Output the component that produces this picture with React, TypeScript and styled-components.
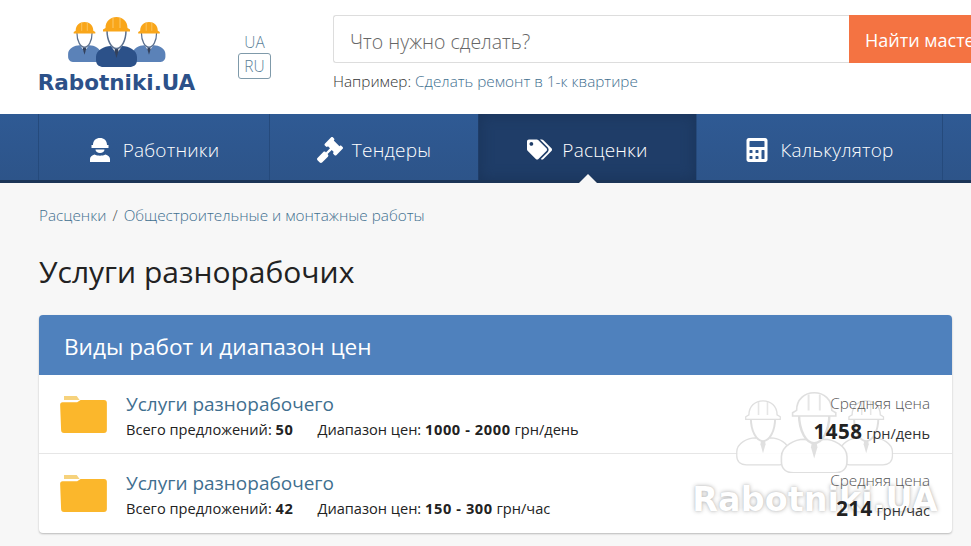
import * as React from "react"
import styled, { createGlobalStyle } from "styled-components"
import { FaCalculator, FaGavel, FaTags } from "react-icons/fa"

const GlobalStyle = createGlobalStyle`
  html, body {
    margin: 0;
    padding: 0;
    height: 100%;
    overflow: hidden;
    background: #f7f7f7;
  }
  body {
    font-family: "Open Sans", "Liberation Sans", sans-serif;
    color: #222;
  }
  * {
    box-sizing: border-box;
  }
`

const Workers = ({ mono }: { mono?: boolean }) => {
  const hat = mono ? "#fff" : "#f9a61a"
  const ridge = mono ? "#e4e4e4" : "#fcc45e"
  const back = mono ? "#fff" : "#5b82b8"
  const front = mono ? "#fff" : "#2c5189"
  const line = mono ? "#dcdcdc" : "#5a6f8e"
  const person = (cx: number, cy: number, s: number, body: string) => (
    <g transform={`translate(${cx} ${cy}) scale(${s})`}>
      <path
        d="M-20.500 40C-20.500 33-12 29-6 29L0 31 6 29C12 29 20.500 33 20.500 40V43C20.500 48 17 50 13 50H-13C-17 50-20.500 48-20.500 43z"
        fill={body}
        stroke={mono ? line : "none"}
        strokeWidth={mono ? 1 : 0}
      />
      <path d="M-5.500 29L0 37 5.500 29z" fill="#fff" />
      <path d="M-1.500 31H1.500L2 34 0 41-2 34z" fill={mono ? "#ddd" : "#33415c"} />
      <path d="M-9.500 13C-9.500 24-5 31.500 0 31.500S9.500 24 9.500 13" fill="#fff" stroke={line} strokeWidth="1.5" />
      <path
        d="M-11 11C-11 4-6 0 0 0S11 4 11 11L13.500 12.500V14.500H-13.500V12.500z"
        fill={hat}
        stroke={mono ? line : "none"}
        strokeWidth={mono ? 1 : 0}
      />
      <path d="M-3.500 1V11M3.500 1V11" stroke={ridge} strokeWidth="1.200" />
    </g>
  )
  return (
    <svg viewBox="0 0 100 51" width="100%" height="100%">
      {person(17.5, 6, 0.8, back)}
      {person(82, 6, 0.8, back)}
      {person(49.5, 1, 1, front)}
    </svg>
  )
}

const WorkerIcon = () => (
  <svg viewBox="0 0 22 25" width="22" height="25" fill="#fff">
    <path d="M4 8C4 3.500 7 1 11 1s7 2.500 7 7h1.500v3h-17V8z" />
    <path d="M6.500 12.500h9c0 2.200-2 3.600-4.500 3.600S6.500 14.700 6.500 12.500z" />
    <path d="M5.500 17.500c1.500.8 3.500 1.200 5.500 1.200s4-.4 5.500-1.200c2.500.6 4.500 2.500 4.500 4.500v3H1v-3c0-2 2-3.900 4.500-4.500z" />
  </svg>
)

const FolderIcon = () => (
  <svg viewBox="0 0 48 38" width="47" height="37">
    <path d="M4 0h13l3 4h-16z" fill="#f6d27c" />
    <path d="M0 9c0-1.500 1-2.500 2.500-2.500h15L21 4h24c2 0 3 1 3 3v28c0 2-1 3-3 3H4c-2 0-3-1-3-3z" fill="#fbb72c" />
  </svg>
)

export default function App() {
  return (
    <Page>
      <GlobalStyle />
      <Header>
        <Logo>
          <LogoArt>
            <Workers />
          </LogoArt>
          <LogoText>Rabotniki.UA</LogoText>
        </Logo>
        <Langs>
          <Lang>UA</Lang>
          <Lang active>RU</Lang>
        </Langs>
        <SearchBlock>
          <SearchRow>
            <SearchInput>Что нужно сделать?</SearchInput>
            <SearchButton>Найти мастера</SearchButton>
          </SearchRow>
          <Hint>
            Например: <HintLink>Сделать ремонт в 1-к квартире</HintLink>
          </Hint>
        </SearchBlock>
      </Header>

      <Nav>
        <NavItem width={231} gap={12}>
          <WorkerIcon />
          Работники
        </NavItem>
        <NavItem width={209} gap={9}>
          <FaGavel size={26} />
          Тендеры
        </NavItem>
        <NavItem width={218} gap={10} active>
          <FaTags size={25} />
          Расценки
        </NavItem>
        <NavItem width={247} gap={11}>
          <FaCalculator size={24} />
          Калькулятор
        </NavItem>
      </Nav>

      <Main>
        <Crumbs>
          <CrumbLink>Расценки</CrumbLink>
          <CrumbSep>/</CrumbSep>
          <CrumbLink>Общестроительные и монтажные работы</CrumbLink>
        </Crumbs>
        <Title>Услуги разнорабочих</Title>
        <Card>
          <CardHead>Виды работ и диапазон цен</CardHead>
          <Row>
            <FolderIcon />
            <RowBody>
              <RowTitle>Услуги разнорабочего</RowTitle>
              <RowMeta>
                <span>
                  Всего предложений: <b>50</b>
                </span>
                <span>
                  Диапазон цен: <b>1000 - 2000</b> грн/день
                </span>
              </RowMeta>
            </RowBody>
            <Price>
              <PriceLabel>Средняя цена</PriceLabel>
              <PriceValue>
                <b>1458</b> грн/день
              </PriceValue>
            </Price>
          </Row>
          <Row>
            <FolderIcon />
            <RowBody>
              <RowTitle>Услуги разнорабочего</RowTitle>
              <RowMeta>
                <span>
                  Всего предложений: <b>42</b>
                </span>
                <span>
                  Диапазон цен: <b>150 - 300</b> грн/час
                </span>
              </RowMeta>
            </RowBody>
            <Price>
              <PriceLabel>Средняя цена</PriceLabel>
              <PriceValue>
                <b>214</b> грн/час
              </PriceValue>
            </Price>
          </Row>
          <Watermark>
            <WatermarkArt>
              <Workers mono />
            </WatermarkArt>
            <WatermarkText>Rabotniki.UA</WatermarkText>
          </Watermark>
        </Card>
      </Main>
    </Page>
  )
}

const Page = styled.div`
  width: 971px;
  height: 546px;
  overflow: hidden;
`

const Header = styled.header`
  height: 114px;
  background: #fff;
  display: flex;
  align-items: flex-start;
  padding-left: 38px;
`

const Logo = styled.div`
  flex: none;
  width: 157px;
  padding-top: 16px;
  display: flex;
  flex-direction: column;
  align-items: center;
`

const LogoArt = styled.div`
  width: 100px;
  height: 51px;
  margin-bottom: 4px;
`

const LogoText = styled.div`
  font-family: "DejaVu Sans", sans-serif;
  font-weight: 700;
  font-size: 21.5px;
  line-height: 24px;
  color: #2c5189;
  white-space: nowrap;
`

const Langs = styled.div`
  flex: none;
  width: 33px;
  margin: 29px 0 0 43px;
  display: flex;
  flex-direction: column;
  align-items: center;
`

const Lang = styled.div<{ active?: boolean }>`
  width: 33px;
  height: ${props => (props.active ? 26 : 24)}px;
  font-size: 15.5px;
  font-weight: 300;
  line-height: 24px;
  text-align: center;
  color: #5b7f99;
  border: 1px solid ${props => (props.active ? "#7f9aaa" : "transparent")};
  border-radius: 3px;
`

const SearchBlock = styled.div`
  margin: 15px 0 0 62px;
  width: 700px;
  flex: none;
`

const SearchRow = styled.div`
  display: flex;
  height: 48px;
`

const SearchInput = styled.div`
  width: 516px;
  border: 1px solid #ddd;
  border-right: none;
  border-radius: 3px 0 0 3px;
  background: #fff;
  padding-left: 16px;
  font-size: 19.5px;
  font-weight: 300;
  line-height: 51px;
  color: #666;
`

const SearchButton = styled.div`
  flex: 1;
  background: #f47342;
  color: #fff;
  padding-left: 16px;
  font-size: 18px;
  line-height: 50px;
  white-space: nowrap;
`

const Hint = styled.div`
  margin-top: 8px;
  font-size: 15.3px;
  font-weight: 300;
  line-height: 20px;
  color: #333;
`

const HintLink = styled.span`
  color: #3f6f8f;
`

const Nav = styled.nav`
  height: 69px;
  padding-left: 38px;
  display: flex;
  background: linear-gradient(#2f5a94, #2d5489);
  border-bottom: 3px solid #1c3557;
`

const NavItem = styled.div<{ width: number; gap: number; active?: boolean }>`
  position: relative;
  flex: none;
  width: ${props => props.width}px;
  display: flex;
  align-items: center;
  justify-content: center;
  gap: ${props => props.gap}px;
  padding-top: 5px;
  color: #fff;
  font-size: 19px;
  font-weight: 300;
  letter-spacing: 0.2px;
  background: ${props => (props.active ? "#1f3d68" : "transparent")};
  border-left: 1px solid ${props => (props.active ? "transparent" : "#254a7c")};
  box-shadow: ${props => (props.active ? "inset 0 0 14px #1a3459" : "none")};

  &:last-child {
    border-right: 1px solid #254a7c;
  }

  ${props =>
    props.active
      ? `&::after {
    content: "";
    position: absolute;
    left: 50%;
    bottom: -3px;
    margin-left: -9px;
    border: 9px solid transparent;
    border-top: 0;
    border-bottom-color: #f7f7f7;
  }`
      : ""}
`

const Main = styled.main`
  padding: 22px 19px 0 39px;
`

const Crumbs = styled.div`
  display: flex;
  gap: 6px;
  font-size: 15.3px;
  font-weight: 300;
  line-height: 20px;
`

const CrumbLink = styled.span`
  color: #3f6f8f;
`

const CrumbSep = styled.span`
  color: #555;
`

const Title = styled.h1`
  margin: 28px 0 24px;
  font-size: 30px;
  font-weight: 400;
  line-height: 38px;
  color: #222;
`

const Card = styled.section`
  position: relative;
  height: 218px;
  background: #fff;
  border-radius: 4px;
  box-shadow: 0 1px 2px rgba(0, 0, 0, 0.25);
`

const CardHead = styled.h2`
  margin: 0;
  height: 60px;
  padding-left: 25px;
  background: #4f81bd;
  border-radius: 4px 4px 0 0;
  color: #fff;
  font-size: 22.6px;
  font-weight: 400;
  line-height: 63px;
`

const Price = styled.div`
  text-align: right;
  position: relative;
  z-index: 1;
  padding-top: 13px;
`

const Row = styled.div`
  height: 78px;
  display: flex;
  align-items: center;
  padding: 0 22px 0 21px;
  gap: 19px;

  & + & {
    height: 80px;
    border-top: 1px solid #e6e6e6;
  }

  & + & ${Price} {
    padding-top: 9px;
  }
`

const RowBody = styled.div`
  flex: 1;
  padding-top: 3px;
`

const RowTitle = styled.div`
  font-size: 19px;
  line-height: 26px;
  color: #3f6f8f;
`

const RowMeta = styled.div`
  display: flex;
  gap: 24px;
  font-size: 14.6px;
  line-height: 24px;
  color: #222;

  b {
    font-weight: 700;
    letter-spacing: 0.6px;
  }
`

const PriceLabel = styled.div`
  font-size: 15.3px;
  font-weight: 300;
  line-height: 22px;
  color: #555;
`

const PriceValue = styled.div`
  margin-top: 1px;
  font-size: 14.5px;
  line-height: 32px;
  color: #333;

  b {
    font-size: 20.5px;
    font-weight: 700;
    letter-spacing: 0.5px;
    color: #222;
  }
`

const Watermark = styled.div`
  position: absolute;
  left: 651px;
  top: 76px;
  width: 250px;
  display: flex;
  flex-direction: column;
  align-items: center;
  pointer-events: none;
  opacity: 0.9;
`

const WatermarkArt = styled.div`
  width: 160px;
  height: 82px;
`

const WatermarkText = styled.div`
  margin-top: 9px;
  font-family: "DejaVu Sans", sans-serif;
  font-weight: 700;
  font-size: 33.5px;
  line-height: 36px;
  color: #fff;
  text-shadow: 0 0 4px #aaa, 0 0 1px #ccc;
  white-space: nowrap;
`
